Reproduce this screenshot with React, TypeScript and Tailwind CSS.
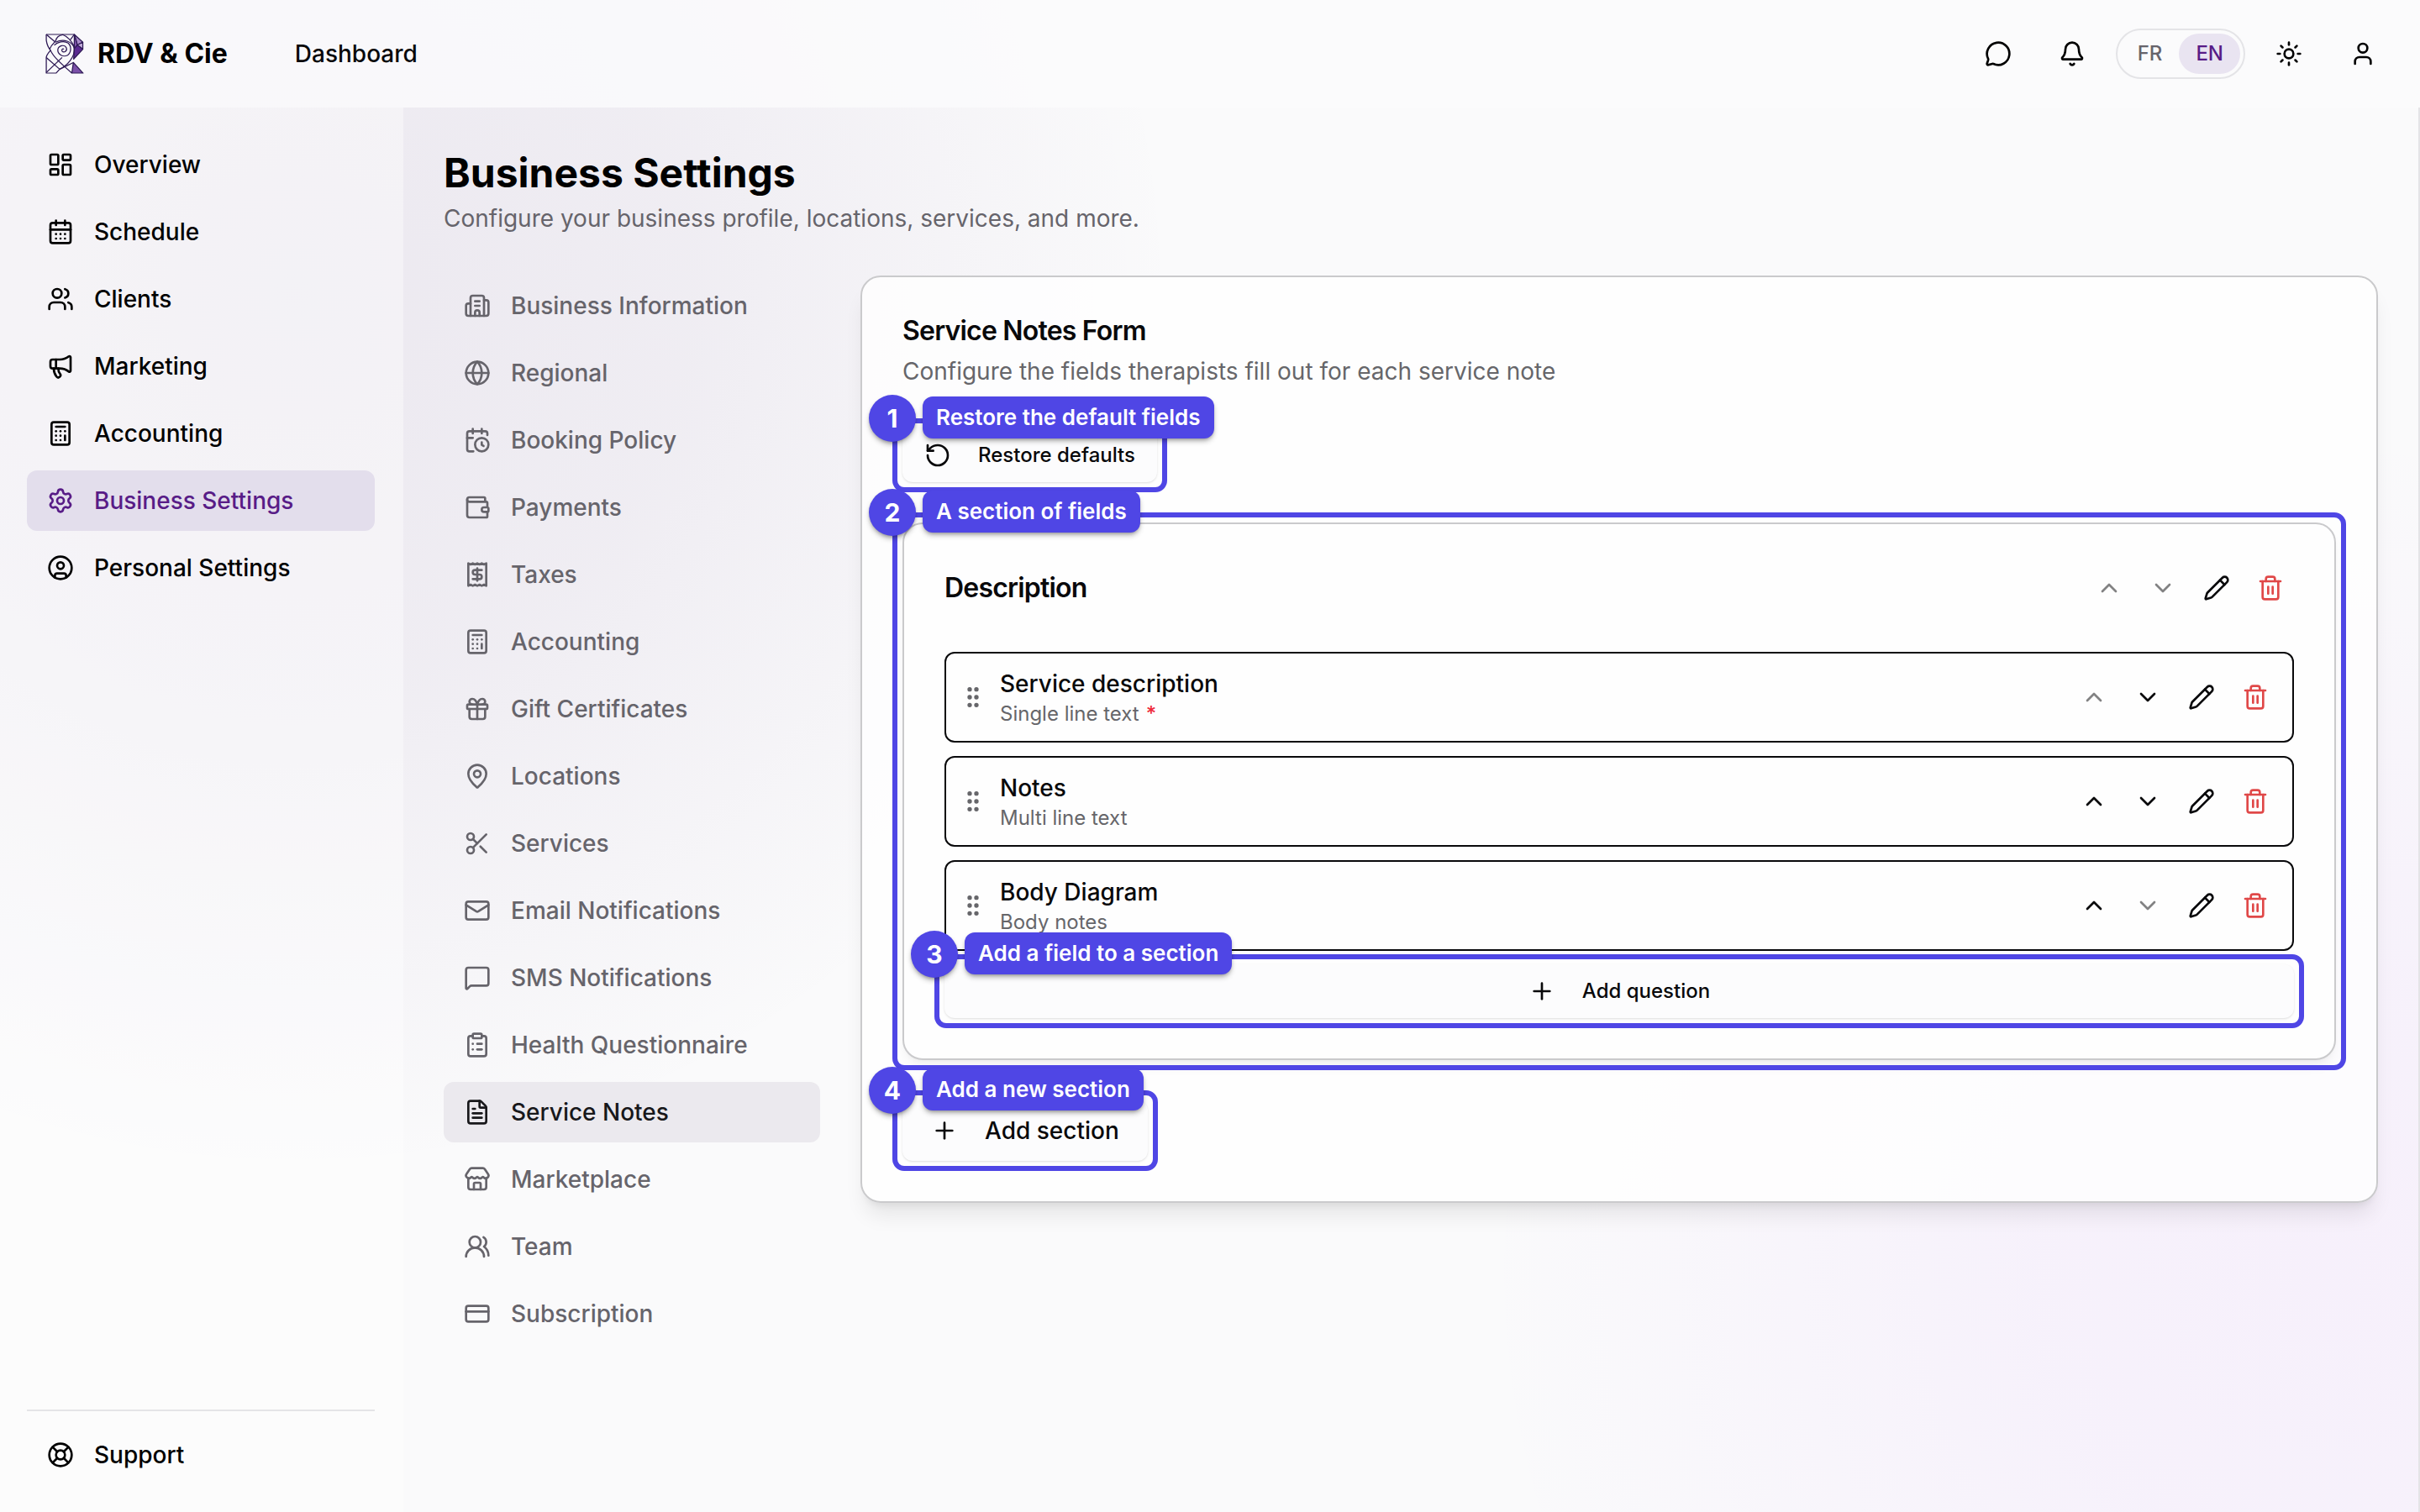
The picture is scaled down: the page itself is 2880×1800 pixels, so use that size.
import {
  Bell,
  Building2,
  Calculator,
  CalendarClock,
  CalendarDays,
  ChevronDown,
  ChevronUp,
  CircleUser,
  ClipboardList,
  CreditCard,
  FileText,
  Gift,
  Globe,
  GripVertical,
  LayoutDashboard,
  LifeBuoy,
  Mail,
  MapPin,
  Megaphone,
  MessageCircle,
  MessageSquare,
  Pencil,
  Plus,
  Receipt,
  RotateCcw,
  Scissors,
  Settings,
  Store,
  Sun,
  Trash2,
  User,
  Users,
  UsersRound,
  Wallet,
  type LucideIcon,
} from "lucide-react";
import { clsx } from "clsx";
import type { ReactNode } from "react";

type NavItem = { label: string; icon: LucideIcon; active?: boolean };

const mainNav: NavItem[] = [
  { label: "Overview", icon: LayoutDashboard },
  { label: "Schedule", icon: CalendarDays },
  { label: "Clients", icon: Users },
  { label: "Marketing", icon: Megaphone },
  { label: "Accounting", icon: Calculator },
  { label: "Business Settings", icon: Settings, active: true },
  { label: "Personal Settings", icon: CircleUser },
];

const settingsNav: NavItem[] = [
  { label: "Business Information", icon: Building2 },
  { label: "Regional", icon: Globe },
  { label: "Booking Policy", icon: CalendarClock },
  { label: "Payments", icon: Wallet },
  { label: "Taxes", icon: Receipt },
  { label: "Accounting", icon: Calculator },
  { label: "Gift Certificates", icon: Gift },
  { label: "Locations", icon: MapPin },
  { label: "Services", icon: Scissors },
  { label: "Email Notifications", icon: Mail },
  { label: "SMS Notifications", icon: MessageSquare },
  { label: "Health Questionnaire", icon: ClipboardList },
  { label: "Service Notes", icon: FileText, active: true },
  { label: "Marketplace", icon: Store },
  { label: "Team", icon: UsersRound },
  { label: "Subscription", icon: CreditCard },
];

const questions = [
  { title: "Service description", type: "Single line text", required: true },
  { title: "Notes", type: "Multi line text", required: false },
  { title: "Body Diagram", type: "Body notes", required: false },
];

export default function App() {
  return (
    <div className="flex min-h-screen flex-col bg-[#fafafb] bg-[radial-gradient(circle_1050px_at_350px_350px,rgba(70,30,110,0.08),rgba(70,30,110,0.06)_45%,transparent),radial-gradient(circle_1000px_at_96%_84%,rgba(190,80,255,0.06),rgba(180,80,255,0.05)_35%,transparent)] font-['Inter',sans-serif] text-[28px] leading-10 text-[#09090b]">
      <TopBar />
      <div className="flex flex-1">
        <Sidebar />
        <main className="min-w-0 flex-1 border-r-2 border-[#e4e4e7] px-12 pt-12 pb-12">
          <h1 className="text-5xl leading-[60px] font-bold text-black">Business Settings</h1>
          <p className="mt-1 text-[#66646b]">Configure your business profile, locations, services, and more.</p>
          <div className="mt-12 flex items-start gap-12">
            <nav className="flex w-[448px] shrink-0 flex-col gap-2" aria-label="Business settings">
              {settingsNav.map((item) => (
                <SettingsLink key={item.label} {...item} />
              ))}
            </nav>
            <ServiceNotesCard />
          </div>
        </main>
      </div>
    </div>
  );
}

function TopBar() {
  return (
    <header className="flex h-32 shrink-0 items-center justify-between bg-[#fbfbfd]/80 px-8">
      <div className="flex items-center gap-20">
        <a className="flex items-center gap-4 pl-[22px]" href="#home">
          <Logo />
          <span className="text-[32px] font-bold text-black">RDV &amp; Cie</span>
        </a>
        <a className="font-medium" href="#dashboard">
          Dashboard
        </a>
      </div>
      <div className="flex items-center gap-4">
        <HeaderButton icon={MessageCircle} label="Messages" />
        <HeaderButton icon={Bell} label="Notifications" />
        <div className="flex rounded-full border-2 border-[#e4e4e7] p-1 text-2xl font-medium">
          <button className="h-12 rounded-full px-5 text-[#66646b]" type="button">
            FR
          </button>
          <button className="h-12 rounded-full bg-[#e9e4f1] px-5 text-[#581c87]" type="button">
            EN
          </button>
        </div>
        <HeaderButton icon={Sun} label="Theme" />
        <HeaderButton icon={User} label="Account" />
      </div>
    </header>
  );
}

function HeaderButton({ icon: Icon, label }: { icon: LucideIcon; label: string }) {
  return (
    <button className="flex size-[72px] items-center justify-center rounded-xl text-black" type="button" aria-label={label}>
      <Icon className="size-8" aria-hidden />
    </button>
  );
}

function Sidebar() {
  return (
    <aside className="flex w-[480px] shrink-0 flex-col justify-between bg-white/40 py-8 pr-[34px] pl-8">
      <nav className="flex flex-col gap-2" aria-label="Main">
        {mainNav.map((item) => (
          <SidebarLink key={item.label} {...item} />
        ))}
      </nav>
      <div className="border-t-2 border-[#e4e4e7] pt-4">
        <SidebarLink icon={LifeBuoy} label="Support" />
      </div>
    </aside>
  );
}

function SidebarLink({ label, icon: Icon, active }: NavItem) {
  return (
    <a
      className={clsx("flex h-[72px] items-center gap-6 rounded-xl px-6 font-medium", active ? "bg-[#e3deec] text-[#581c87]" : "text-black")}
      href="#nav"
      aria-current={active ? "page" : undefined}
    >
      <Icon className="size-8" aria-hidden />
      {label}
    </a>
  );
}

function SettingsLink({ label, icon: Icon, active }: NavItem) {
  return (
    <a
      className={clsx("flex h-[72px] items-center gap-6 rounded-xl px-6 font-medium", active ? "bg-[#ebe9ee] text-[#18181b]" : "text-[#66646b]")}
      href="#settings"
      aria-current={active ? "page" : undefined}
    >
      <Icon className="size-8" aria-hidden />
      {label}
    </a>
  );
}

function ServiceNotesCard() {
  return (
    <section className="min-w-0 flex-1 rounded-3xl border-2 border-[#cacacc] bg-white/80 p-12 shadow-xl shadow-black/8">
      <h2 className="text-[32px] leading-8 font-semibold tracking-tight">Service Notes Form</h2>
      <p className="mt-3 text-[#66666a]">Configure the fields therapists fill out for each service note</p>

      <div className="mt-12 flex flex-col items-start gap-12">
        <Callout step={1} label="Restore the default fields">
          <button className="flex h-16 items-center gap-8 rounded-xl bg-[#fcfcfd] px-[26px] text-2xl font-medium shadow-sm" type="button">
            <RotateCcw className="size-8" aria-hidden />
            Restore defaults
          </button>
        </Callout>

        <Callout className="w-full" step={2} label="A section of fields">
          <div className="rounded-3xl border-2 border-[#cacacc] bg-[#fefefe] p-12 shadow-lg shadow-black/5">
            <div className="flex items-center justify-between">
              <h3 className="text-[32px] leading-8 font-semibold tracking-tight">Description</h3>
              <RowActions canMoveUp={false} canMoveDown={false} />
            </div>
            <ul className="mt-12 mb-4 flex flex-col gap-4">
              {questions.map((question, index) => (
                <li key={question.title} className="flex items-center gap-4 rounded-xl border-2 border-[#09090b] p-4">
                  <GripVertical className="size-8 text-[#66666a]" aria-hidden />
                  <div className="flex-1">
                    <p className="font-medium">{question.title}</p>
                    <p className="text-2xl leading-8 text-[#66666a]">
                      {question.type}
                      {question.required ? <span className="ml-2 font-medium text-[#ef2b3a]">*</span> : null}
                    </p>
                  </div>
                  <RowActions canMoveUp={index > 0} canMoveDown={index < questions.length - 1} />
                </li>
              ))}
            </ul>
            <Callout step={3} label="Add a field to a section">
              <button className="flex h-16 w-full items-center justify-center gap-8 rounded-xl bg-[#fcfcfd] text-2xl font-medium shadow-sm" type="button">
                <Plus className="size-8" aria-hidden />
                Add question
              </button>
            </Callout>
          </div>
        </Callout>

        <Callout step={4} label="Add a new section">
          <button className="flex h-[72px] items-center gap-8 rounded-xl bg-[#fcfcfd] px-[34px] font-medium shadow-sm" type="button">
            <Plus className="size-8" aria-hidden />
            Add section
          </button>
        </Callout>
      </div>
    </section>
  );
}

function RowActions({ canMoveUp, canMoveDown }: { canMoveUp: boolean; canMoveDown: boolean }) {
  return (
    <div className="flex gap-2">
      <IconButton disabled={!canMoveUp} icon={ChevronUp} label="Move up" />
      <IconButton disabled={!canMoveDown} icon={ChevronDown} label="Move down" />
      <IconButton icon={Pencil} label="Edit" />
      <IconButton className="text-[#e04848]" icon={Trash2} label="Delete" />
    </div>
  );
}

function IconButton({ icon: Icon, label, disabled, className }: { icon: LucideIcon; label: string; disabled?: boolean; className?: string }) {
  return (
    <button className={clsx("flex size-14 items-center justify-center rounded-xl disabled:opacity-50", className)} disabled={disabled} type="button" aria-label={label}>
      <Icon className="size-8" aria-hidden />
    </button>
  );
}

// Numbered highlight ring drawn around the element it wraps.
function Callout({ step, label, className, children }: { step: number; label: string; className?: string; children: ReactNode }) {
  return (
    <div className={clsx("relative", className)}>
      {children}
      <div className="pointer-events-none absolute -inset-3 rounded-[14px] border-[6px] border-[#4f46e5]" />
      <span className="absolute -top-10 -left-10 flex size-14 items-center justify-center rounded-full bg-[#4f46e5] text-[30px] font-bold text-white shadow-md shadow-black/30">{step}</span>
      <span className="absolute -top-[38px] left-6 flex h-[50px] items-center rounded-xl bg-[#4f46e5] px-4 text-[26px] font-semibold whitespace-nowrap text-white shadow-md shadow-black/30">{label}</span>
    </div>
  );
}

function Logo() {
  return (
    <svg className="h-12 w-[46px]" viewBox="151 122 127 145" preserveAspectRatio="none" fill="none" stroke="#2e1a55" strokeWidth="3.5" strokeLinejoin="round" aria-hidden>
      <path fill="#a98bc9" d="M246 125 274 153 256 163z" />
      <path fill="#c3aedb" d="M274 153V178L256 163z" />
      <path fill="#8558b0" d="M246 125 256 163 246 176z" />
      <path fill="#5b2a91" d="M246 176 256 163 274 178 244 214z" />
      <path fill="#7b50a8" d="M243 226 275 264H238z" />
      <path d="M154 125H246M154 125V146C156 162 160 172 168 182 160 192 154 200 154 208V264H186L198 250" />
      <path d="M154 125 184 153M165 178C172 160 183 152 185 148 187 136 197 128 208 126 222 132 234 144 246 168" />
      <path d="M184 153C210 140 240 148 246 176 248 206 224 236 198 250M246 125 232 146" />
      <path d="M212 178C208 174 203 180 206 185 212 193 224 184 220 173 214 160 196 164 192 178 190 196 208 208 224 200 236 190 238 168 226 156 212 146 190 152 180 164" />
      <path d="M168 182C176 204 200 228 238 264M154 208 198 250M154 262 206 208M198 250 243 226" />
    </svg>
  );
}
